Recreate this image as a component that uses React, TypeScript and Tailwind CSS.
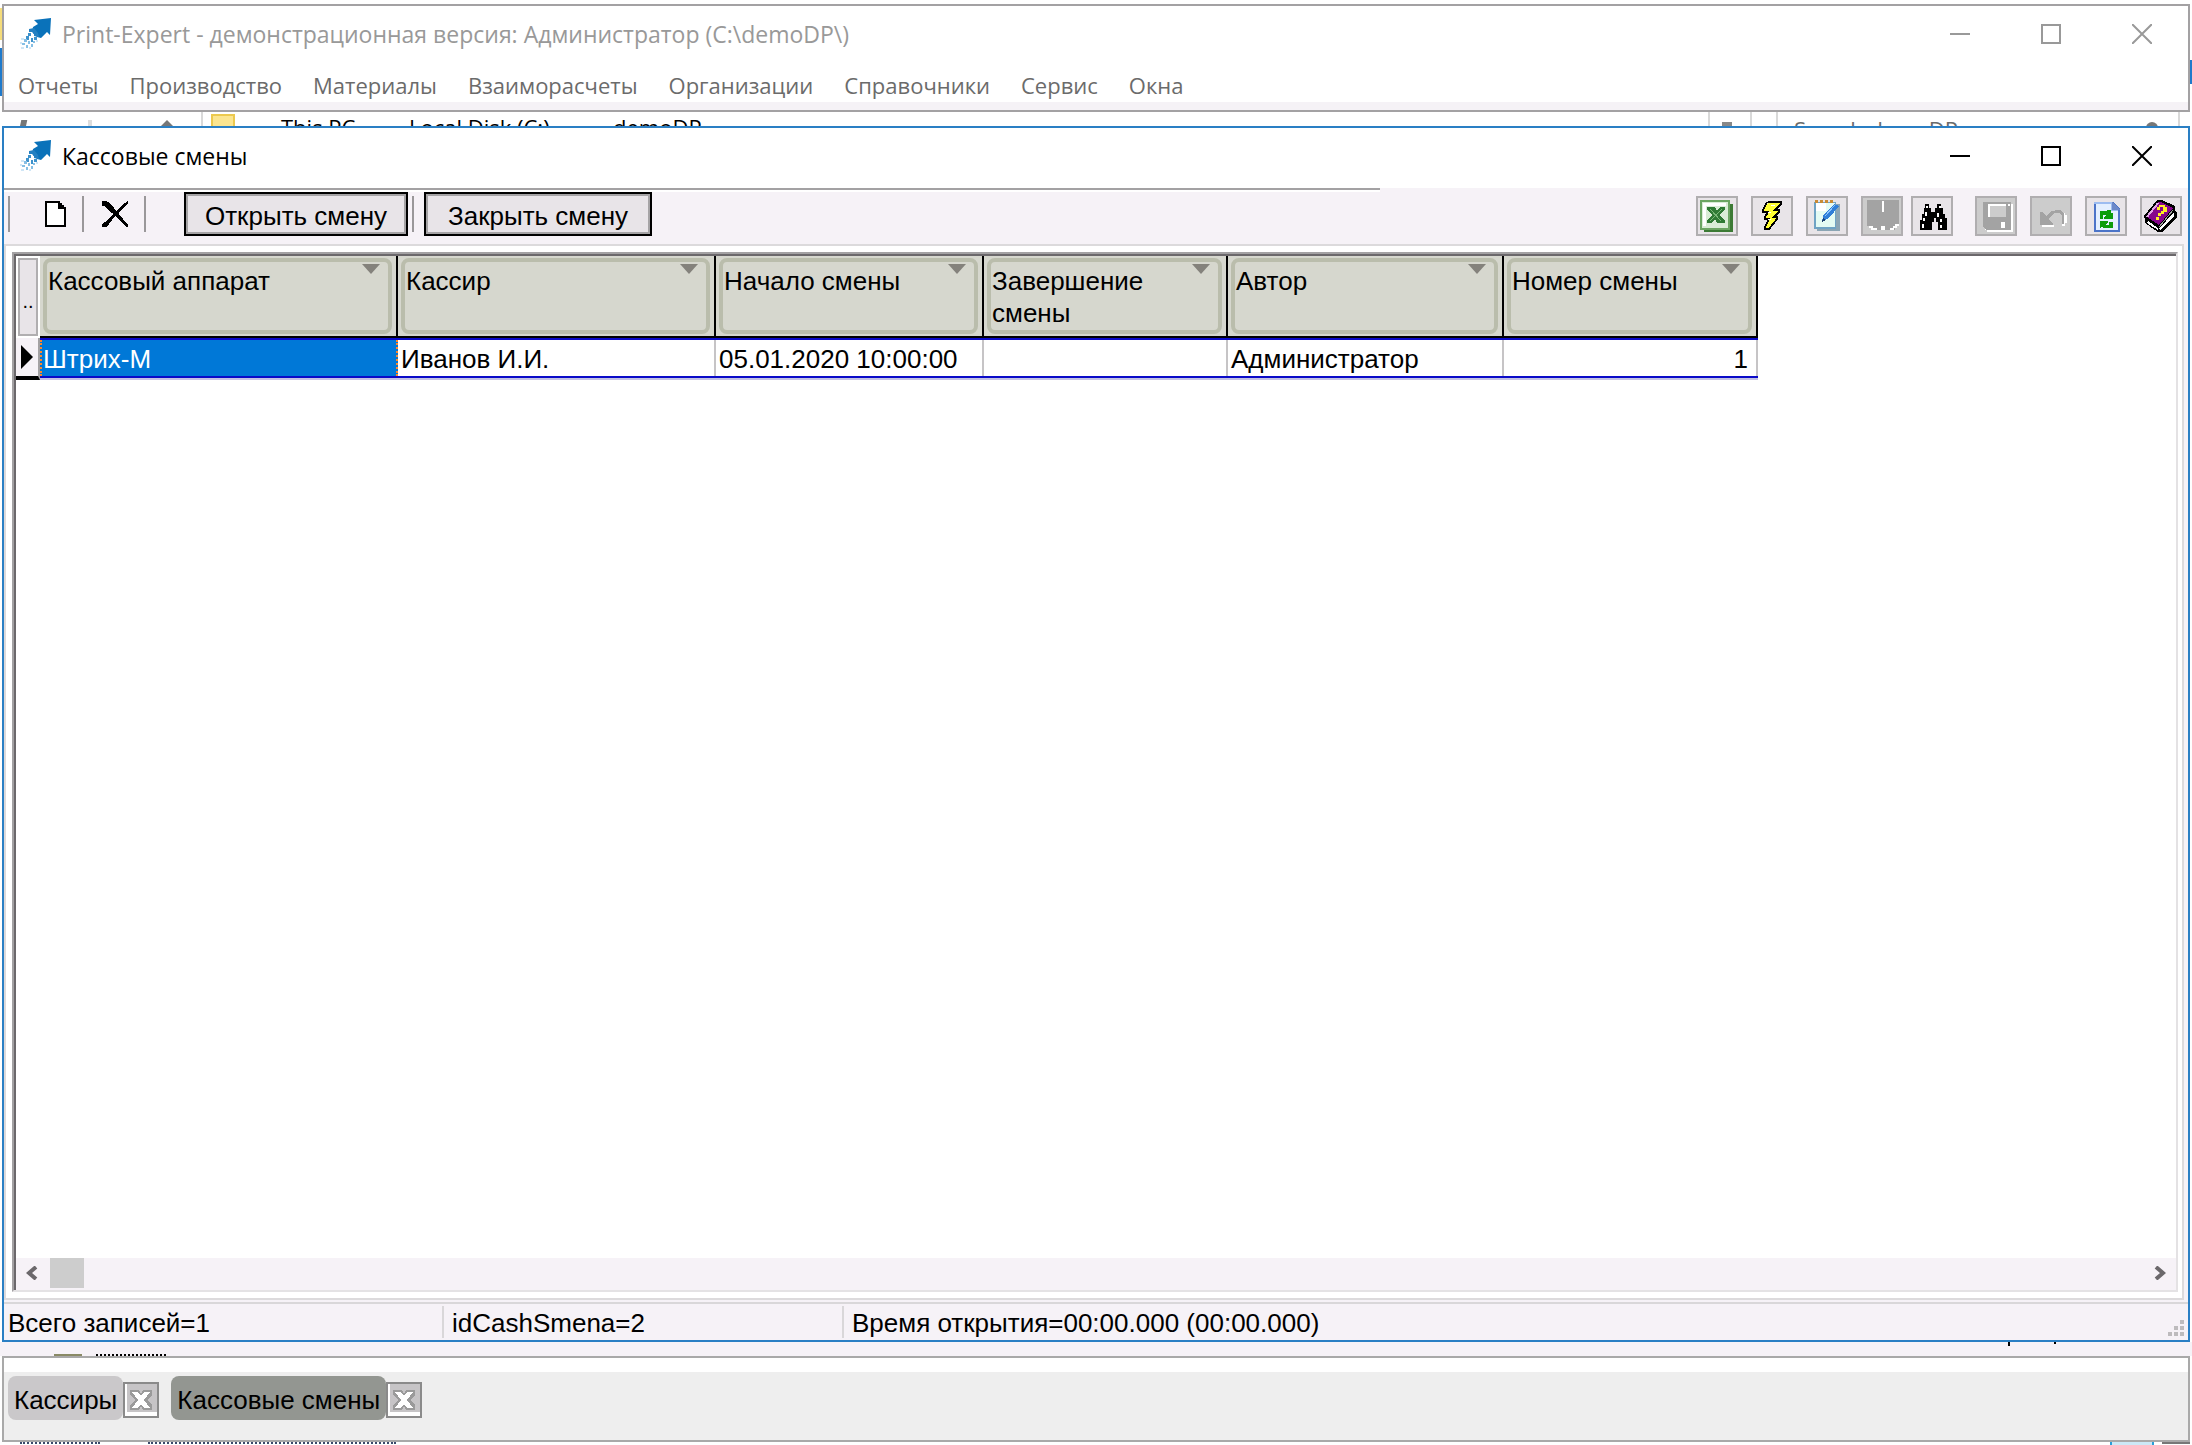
import type { ReactNode } from "react";

const menuItems = [
    "Отчеты",
    "Производство",
    "Материалы",
    "Взаиморасчеты",
    "Организации",
    "Справочники",
    "Сервис",
    "Окна",
];

const columns = [
    { title: "Кассовый аппарат", width: "w-[358px]" },
    { title: "Кассир", width: "w-[318px]" },
    { title: "Начало смены", width: "w-[268px]" },
    { title: "Завершение смены", width: "w-[244px]" },
    { title: "Автор", width: "w-[276px]" },
    { title: "Номер смены", width: "w-[254px]" },
];

const rows = [
    ["Штрих-М", "Иванов И.И.", "05.01.2020 10:00:00", "", "Администратор", "1"],
];

function AppLogo() {
    return (
        <svg className="size-8 shrink-0" viewBox="0 0 32 32" aria-hidden="true">
            <path d="M14 2 31 0 30 17 27 14 21 20 17 19 12 14 13 9 18 6Z" fill="#0a72ba" />
            <path d="M9 11 14 10 18 15 19 19 14 18 13 14 9 14Z" fill="#2380c2" />
            <path
                d="M8 15h3v3H8zM14 19h3v3h-3zM6 18h3v4H6zM11 20h2v4h-2z"
                fill="#3d92cc"
            />
            <path
                d="M4 21h3v3H4zM8 23h2v3H8zM2 25h3v2H2zM6 27h2v3H6zM11 26h2v3h-2zM13 23h2v2h-2z"
                fill="#86bfe4"
            />
            <path d="M0 24h2v2H0zM1 29h3v2H1zM9 29h2v2H9zM1 20h3v2H1zM16 22h2v2h-2z" fill="#cfe6f6" />
            <path d="M12 16h2v2h-2zM9 19h2v2H9z" fill="#fff" />
        </svg>
    );
}

function WindowControls({ color }: { color: string }) {
    return (
        <div className={`flex items-center gap-[71px] pr-9 ${color}`}>
            <button type="button" aria-label="Свернуть" className="flex h-5 w-5 items-center">
                <span className="h-0.5 w-5 bg-current" />
            </button>
            <button type="button" aria-label="Развернуть" className="h-5 w-5 border-2 border-current" />
            <button type="button" aria-label="Закрыть" className="h-5 w-5">
                <svg viewBox="0 0 20 20" fill="none" stroke="currentColor" strokeWidth="2">
                    <path d="M0 0 20 20M20 0 0 20" />
                </svg>
            </button>
        </div>
    );
}

function ToolButton({
    label,
    disabled,
    children,
}: {
    label: string;
    disabled?: boolean;
    children: ReactNode;
}) {
    return (
        <button
            type="button"
            aria-label={label}
            disabled={disabled}
            className="h-10 w-[42px] border-2 border-[#b0aeb0] bg-[#e8e4e8] disabled:bg-[#cccccc]"
        >
            <svg viewBox="0 0 38 36" className="h-9 w-[38px]" shapeRendering="crispEdges">
                {children}
            </svg>
        </button>
    );
}

function Separator() {
    return <span className="h-9 w-0.5 bg-[#9a989a]" />;
}

function ExcelIcon() {
    return (
        <>
            <path d="M6 6h29v28H6z" fill="#3c7a35" />
            <path d="M2 2h30v30H2z" fill="#6ba562" />
            <path d="M4 4h26v26H4z" fill="#d9ecd6" />
            <path d="M5 5h23v3H5zM5 8h3v20H5z" fill="#fff" />
            <path d="M9 9h8l2 4 3-4h5v2l-5 6 5 6v2h-8l-2-4-3 4H9v-2l5-6-5-6z" fill="#2f7a34" />
            <path d="m12 11 11 12M24 11 12 23" stroke="#7ab878" strokeWidth="1" />
        </>
    );
}

function LightningIcon() {
    return (
        <>
            <path
                d="M16 4h12v2l-6 6h4v2l-5 5h3v2l-8 10h-4v-2l4-8h-4v-2l3-5h-5v-2z"
                fill="#ffff33"
            />
            <path
                d="M15 4h13v2l-6 6h4v2l-5 5h3v2l-8 10h-4v-2l4-8h-4v-2l3-5h-5v-2l4-8"
                fill="none"
                stroke="#000"
                strokeWidth="2"
            />
            <path d="M18 7h4M15 14h3M15 21h3" stroke="#fff" strokeWidth="1" />
        </>
    );
}

function NotepadIcon() {
    return (
        <>
            <path d="M9 6h23v27H9z" fill="#8ba5b4" />
            <path d="M6 4h22v27H6z" fill="#6fa3c4" />
            <path d="M8 5h19v24H8z" fill="#e4fbf3" />
            <path d="M8 5h10v8H8z" fill="#fff" />
            <path
                d="M7 2h3v3H7zM12 2h3v3h-3zM17 2h3v3h-3zM22 2h3v3h-3z"
                fill="#c98b35"
            />
            <path d="m15 18 11-12 5 2-10 12-7 4z" fill="#2f7fd8" />
            <path d="m17 18 10-11" stroke="#8cc4ff" strokeWidth="1" />
            <path d="m14 24 1-4 3 2z" fill="#1c3f70" />
        </>
    );
}

function OpenBookIcon() {
    return (
        <>
            <path d="M4 2h32v26h-4v4H8v-4H4z" fill="#a3a3a3" />
            <path d="M19 3h2v11h-2z" fill="#fff" />
            <path
                d="M6 28h4v2h4v2H8v-2H6zM18 28h4v4h-4zM32 26h4v2h-2v2h-3v2h-4v-2h3v-2h2z"
                fill="#fff"
            />
        </>
    );
}

function BinocularsIcon() {
    return (
        <>
            <path
                d="M12 6h4v4h2v4h4v-4h2V6h4v4h2v6h2v4h2v12h-9v-8h-2v-4h-2v4h-2v8H7V22h2v-6h2v-6h1z"
                fill="#000"
            />
            <path
                d="M13 8h2v2h-2zM26 8h2v2h-2zM12 14h2v4h-2zM10 20h2v3h-2zM24 15h2v4h-2zM27 21h2v3h-2zM9 26h2v4H9zM27 27h2v3h-2z"
                fill="#fff"
            />
        </>
    );
}

function SaveIcon() {
    return (
        <>
            <path d="M8 6h28v28H10v-2H8z" fill="#fff" />
            <path d="M6 4h28v28H9l-3-3z" fill="#a3a3a3" />
            <path d="M11 6h18v13H11z" fill="#fff" />
            <path d="M13 8h16v11H13z" fill="#cccccc" />
            <path d="M31 6h2v2h-2zM24 24h4v6h-4z" fill="#fff" />
        </>
    );
}

function UndoIcon() {
    return (
        <>
            <path d="M10 27h12v2H10zM31 15h2v2h2v8h-2v3h-3v-2h1z" fill="#fff" />
            <path d="M8 14h2l4 4 5-5h3l1-1h5l4 4v10h-2v-8l-3-3h-4l-5 4-1 3 4 4v1H8z" fill="#a3a3a3" />
        </>
    );
}

function RefreshIcon() {
    return (
        <>
            <path d="M7 4h19l7 7v23H7z" fill="#4c74c8" />
            <path d="M7 4h18l6 7v21H9V6H7z" fill="#9cbcf0" />
            <path d="M9 6h15v7h7v19H9z" fill="#e3efff" />
            <path d="M25 4v8h8z" fill="#6c88c8" />
            <path d="M13 13h5l3-1h3v3h2v6h-9v-2l3-2h-4v4h-3z" fill="#0c9c0c" />
            <path d="M13 23h8v2l-3 2h4v-3h4v6H16l-1-2-2 2z" fill="#0c9c0c" />
        </>
    );
}

function HelpBookIcon() {
    return (
        <>
            <path d="M15 2h5l13 6v4l2 3v4L20 34h-4L3 25v-4l-1-3z" fill="#000" />
            <path d="m17 31 15-17v4L18 32zM6 23l10 7v2L5 25z" fill="#fff" />
            <path d="M16 4h3l12 6-14 17L5 19z" fill="#86058c" />
            <path d="M5 19 16 5" stroke="#e0a6e4" strokeWidth="2" />
            <path d="m17 29 14-17" stroke="#9c9c9c" strokeWidth="1" />
            <path
                d="M15 9h2V7h6v2h2v5h-3v2h-3v2h-3v-3h3v-2h2V9h-3v3h-3zM14 19h3v3h-3z"
                fill="#ffee22"
            />
        </>
    );
}

function MainWindow() {
    return (
        <section className="flex shrink-0">
            <div className="w-0.5 pt-1">
                <div className="h-8 bg-[#f5dc7a]" />
                <div className="mt-2 h-12 bg-[#1f7acb]" />
            </div>
            <div className="min-w-0 flex-1 border-2 border-[#a3a1a3] bg-white font-['Open_Sans','Noto_Sans',sans-serif]">
                <header className="flex h-14 items-center justify-between text-[#999999]">
                    <div className="flex items-center gap-2.5 pl-4">
                        <AppLogo />
                        <h1 className="text-[23px] leading-8">
                            Print-Expert - демонстрационная версия: Администратор (C:\demoDP\)
                        </h1>
                    </div>
                    <WindowControls color="text-[#999999]" />
                </header>
                <nav className="flex h-10 gap-[31px] pl-3.5 text-[22px] leading-[46px] text-[#6b6b6b]">
                    {menuItems.map((item) => (
                        <button key={item} type="button">
                            {item}
                        </button>
                    ))}
                </nav>
                <div className="h-2 bg-[#f5f2f6]" />
            </div>
            <div className="w-0.5 pt-14">
                <div className="h-6 bg-[#1f7acb]" />
            </div>
        </section>
    );
}

// Explorer window that shows through between the two application windows.
function ExplorerAddressBar() {
    return (
        <div className="flex h-3.5 shrink-0 overflow-hidden bg-white pr-3 text-[22px] leading-[30px] font-['Open_Sans','Noto_Sans',sans-serif]">
            <div className="flex w-[201px] items-start justify-between pt-2 pr-5 pl-5">
                <span className="h-3 w-1.5 -skew-x-12 bg-[#777777]" />
                <span className="h-3 w-1 bg-[#dddddd]" />
                <svg className="h-3 w-7" viewBox="0 0 28 12" aria-hidden="true">
                    <path d="M2 12 14 0l12 12z" fill="#777777" />
                </svg>
            </div>
            <div className="flex flex-1 border-x-2 border-[#d9d9d9] pl-2 text-black">
                <span className="mt-0.5 h-8 w-6 border-2 border-[#ecc94f] bg-[#fbe590]" />
                <span className="ml-[46px] w-[128px]">This PC</span>
                <span className="w-[204px]">Local Disk (C:)</span>
                <span>demoDP</span>
            </div>
            <div className="w-10 pt-2.5 pl-3">
                <div className="h-4 w-2.5 bg-[#888888]" />
            </div>
            <div className="w-[26px] border-l-2 border-[#d9d9d9]" />
            <div className="flex w-[404px] justify-between border-x-2 border-[#d9d9d9] pt-0.5 pr-5 pl-4 text-[#6b6b6b]">
                <span>Search demoDP</span>
                <span className="mt-2 size-3 rounded-full bg-[#777777]" />
            </div>
        </div>
    );
}

function Toolbar() {
    return (
        <div className="flex h-14 shrink-0 items-start justify-between bg-[#f6f2f7] pr-1.5">
            <div className="min-w-0">
                <div className="h-1 w-[1376px] border-t-2 border-b-2 border-t-[#a3a1a3] border-b-white" />
                <div className="flex h-11 items-center pl-1">
                    <Separator />
                    <button type="button" aria-label="Новая запись" className="ml-[34px] h-7 w-6">
                        <svg viewBox="0 0 24 28" shapeRendering="crispEdges">
                            <path
                                d="M2 2h13v2h2v2h2v2h2v18H2zM15 2v6h6"
                                fill="#fff"
                                stroke="#000"
                                strokeWidth="2"
                            />
                        </svg>
                    </button>
                    <span className="w-3.5" />
                    <Separator />
                    <button type="button" aria-label="Удалить запись" className="ml-[18px] h-[26px] w-7">
                        <svg viewBox="0 0 28 26" fill="#000" shapeRendering="crispEdges">
                            <path d="M0 0h4l4 2 18 22v2h-2l-8-8-6-6-8-7H0z" />
                            <path d="M26 0v2l-9 9-7 8-5 7H0v-3l6-4 8-9 9-8z" />
                        </svg>
                    </button>
                    <span className="w-3.5" />
                    <Separator />
                    <button
                        type="button"
                        className="ml-[38px] h-11 w-[224px] border-2 border-black bg-[#e8e4e8] pt-1 text-[26px] leading-9 shadow-[inset_2px_2px_#a5a3a5,inset_-2px_-2px_#a5a3a5]"
                    >
                        Открыть смену
                    </button>
                    <span className="w-1" />
                    <Separator />
                    <button
                        type="button"
                        className="ml-2.5 h-11 w-[228px] border-2 border-black bg-[#e8e4e8] pt-1 text-[26px] leading-9 shadow-[inset_2px_2px_#a5a3a5,inset_-2px_-2px_#a5a3a5]"
                    >
                        Закрыть смену
                    </button>
                </div>
            </div>
            <div className="flex pt-2">
                <div className="flex gap-[13px]">
                    <ToolButton label="Экспорт в Excel"><ExcelIcon /></ToolButton>
                    <ToolButton label="Быстрое действие"><LightningIcon /></ToolButton>
                    <ToolButton label="Редактировать"><NotepadIcon /></ToolButton>
                    <ToolButton label="Журнал" disabled><OpenBookIcon /></ToolButton>
                </div>
                <div className="ml-2">
                    <ToolButton label="Поиск"><BinocularsIcon /></ToolButton>
                </div>
                <div className="ml-[22px] flex gap-[13px]">
                    <ToolButton label="Сохранить" disabled><SaveIcon /></ToolButton>
                    <ToolButton label="Отменить" disabled><UndoIcon /></ToolButton>
                    <ToolButton label="Обновить"><RefreshIcon /></ToolButton>
                    <ToolButton label="Справка"><HelpBookIcon /></ToolButton>
                </div>
            </div>
        </div>
    );
}

function ShiftsTable() {
    return (
        <table className="w-[1742px] table-fixed border-separate border-spacing-0 text-[26px] text-black">
            <thead>
                <tr className="h-[82px]">
                    <th className="w-6 p-0 align-top">
                        <button
                            type="button"
                            aria-label="Настройка столбцов"
                            className="mt-0.5 ml-0.5 block h-[78px] w-5 border-2 border-[#b0aeb0] bg-[#e8e4e8] pt-2 text-center text-xl leading-8 font-normal"
                        >
                            ..
                        </button>
                    </th>
                    {columns.map((column) => (
                        <th
                            key={column.title}
                            scope="col"
                            className={`${column.width} border-r-2 border-b-2 border-black bg-[#d6d7ce] p-0 text-left align-top font-normal`}
                        >
                            <div className="mt-0.5 mr-1 ml-[3px] flex h-[76px] items-start rounded-lg border-4 border-[#babdac] pr-2 pl-px">
                                <span className="min-w-0 flex-1 pt-[3px] leading-8">{column.title}</span>
                                <svg className="mt-0.5 h-2.5 w-[18px] shrink-0" viewBox="0 0 18 10" aria-hidden="true">
                                    <path d="M0 0h18l-9 10z" fill="#84827c" />
                                </svg>
                            </div>
                        </th>
                    ))}
                </tr>
            </thead>
            <tbody>
                {rows.map((row) => (
                    <tr key={row[0]}>
                        <td className="border-r-2 border-b-4 border-r-[#a3a1a3] border-b-black bg-[#f6f2f7] p-0">
                            <svg className="mx-auto h-6 w-3" viewBox="0 0 12 24" aria-hidden="true">
                                <path d="M0 0v24l12-12z" />
                            </svg>
                        </td>
                        {row.map((value, i) => (
                            <td
                                key={columns[i].title}
                                className="border-b-2 border-[#c4c2e4] p-0 leading-[38px]"
                            >
                                <div
                                    className={
                                        i === 0
                                            ? "h-10 border-y-2 border-[#0a0ac8] bg-[#0078d7] text-white"
                                            : "h-10 border-y-2 border-[#0a0ac8] bg-white"
                                    }
                                >
                                    <div
                                        className={
                                            i === 0
                                                ? "h-9 border-x-2 border-dotted border-[#ff8728] pl-px"
                                                : i === row.length - 1
                                                  ? "h-9 border-r-2 border-[#c6c4c6] pr-2 text-right"
                                                  : "h-9 border-r-2 border-[#c6c4c6] pl-[3px]"
                                        }
                                    >
                                        {value}
                                    </div>
                                </div>
                            </td>
                        ))}
                    </tr>
                ))}
            </tbody>
        </table>
    );
}

function GridScrollbar() {
    return (
        <div className="flex h-8 shrink-0 items-start bg-[#f6f2f7] text-[#6b686b]">
            <button type="button" aria-label="Прокрутить влево" className="flex h-[30px] w-[34px] items-center pl-2.5">
                <svg className="h-3.5 w-3" viewBox="0 0 12 14" fill="none" stroke="currentColor" strokeWidth="4">
                    <path d="m10 1-7 6 7 6" />
                </svg>
            </button>
            <div className="h-[30px] w-[34px] bg-[#cdcdcd]" />
            <button type="button" aria-label="Прокрутить вправо" className="ml-auto flex h-[30px] w-[34px] items-center justify-end pr-2.5">
                <svg className="h-3.5 w-3" viewBox="0 0 12 14" fill="none" stroke="currentColor" strokeWidth="4">
                    <path d="m2 1 7 6-7 6" />
                </svg>
            </button>
        </div>
    );
}

function StatusBar() {
    return (
        <footer className="flex h-[38px] shrink-0 border-t-2 border-[#d9d7d9] bg-[#f6f2f7] text-[26px] leading-[38px]">
            <div className="w-[438px] pl-1">Всего записей=1</div>
            <div className="mt-0.5 h-8 w-[400px] border-l-2 border-[#d9d7d9] pl-2 leading-[34px]">
                idCashSmena=2
            </div>
            <div className="mt-0.5 h-8 flex-1 border-l-2 border-[#d9d7d9] pl-2 leading-[34px]">
                Время открытия=00:00.000 (00:00.000)
            </div>
            <svg className="mr-1 mb-1 h-4 w-4 self-end" viewBox="0 0 16 16" fill="#bdbbbd" aria-hidden="true">
                <path d="M12 0h4v4h-4zM12 6h4v4h-4zM12 12h4v4h-4zM6 6h4v4H6zM6 12h4v4H6zM0 12h4v4H0z" />
            </svg>
        </footer>
    );
}

function ShiftsWindow() {
    return (
        <main className="mx-0.5 flex min-h-0 flex-1 flex-col border-2 border-[#2a7fc4] bg-[#f6f2f7]">
            <header className="flex h-[60px] shrink-0 items-center justify-between bg-white pb-1 font-['Open_Sans','Noto_Sans',sans-serif]">
                <div className="flex items-center gap-2.5 pl-4">
                    <AppLogo />
                    <h2 className="text-[23px] leading-8 text-black">Кассовые смены</h2>
                </div>
                <WindowControls color="text-black" />
            </header>
            <Toolbar />
            <div className="mr-1 flex min-h-0 flex-1 flex-col border-2 border-[#dcdadc] bg-white pt-1.5 pr-1 pb-1.5 pl-1.5">
                <div className="flex min-h-0 flex-1 flex-col border-2 border-t-[#a3a1a3] border-r-[#e4e2e4] border-b-[#e4e2e4] border-l-[#a3a1a3]">
                    <div className="flex min-h-0 flex-1 flex-col border-t-2 border-l-2 border-[#6b686b]">
                        <div className="min-h-0 flex-1 overflow-hidden">
                            <ShiftsTable />
                        </div>
                        <GridScrollbar />
                    </div>
                </div>
            </div>
            <div className="h-0.5 shrink-0" />
            <StatusBar />
        </main>
    );
}

function TabClose({ label }: { label: string }) {
    return (
        <button
            type="button"
            aria-label={label}
            className="flex h-9 w-9 items-center justify-center border-2 border-[#8a8a8a] bg-[#c6c4c6] shadow-[inset_2px_-4px_#ffffff]"
        >
            <svg className="h-5 w-6" viewBox="0 0 24 20" shapeRendering="crispEdges">
                <path d="M1 0h9l2 4 2-4h9v5l-5 5 5 5v5h-9l-2-4-2 4H1v-5l5-5-5-5z" fill="#9a9a9a" />
                <path d="M3 2h6l3 4 3-4h6l-6 8 6 8h-6l-3-4-3 4H3l6-8z" fill="#fff" />
            </svg>
        </button>
    );
}

function WindowTabs() {
    return (
        <section className="mx-0.5 shrink-0 border-2 border-[#a9a9a9] bg-white pt-3.5">
            <div className="flex h-[68px] items-start gap-3 bg-[#eeeeee] pt-1 pl-1 text-[26px] leading-10">
                <div className="flex items-start">
                    <button type="button" className="h-11 rounded-lg bg-[#cac8ca] px-1.5 pt-1">
                        Кассиры
                    </button>
                    <div className="pt-1.5">
                        <TabClose label="Закрыть Кассиры" />
                    </div>
                </div>
                <div className="flex items-start">
                    <button type="button" className="h-11 rounded-lg bg-[#939691] px-1.5 pt-1">
                        Кассовые смены
                    </button>
                    <div className="pt-1.5">
                        <TabClose label="Закрыть Кассовые смены" />
                    </div>
                </div>
            </div>
        </section>
    );
}

export default function App() {
    return (
        <div className="flex h-screen flex-col bg-white pt-1 font-['Liberation_Sans',Arial,sans-serif] text-black">
            <MainWindow />
            <ExplorerAddressBar />
            <ShiftsWindow />
            <div className="flex h-3.5 shrink-0 justify-between bg-[#f6f2f7] pr-[136px] pl-[54px]">
                <div className="flex items-end gap-3.5">
                    <span className="h-0.5 w-7 bg-[#8a8a66]" />
                    <span className="w-[70px] border-b-2 border-dotted border-black" />
                </div>
                <div className="flex gap-11">
                    <span className="h-1 w-0.5 bg-black" />
                    <span className="h-0.5 w-0.5 bg-black" />
                </div>
            </div>
            <WindowTabs />
            <div className="flex h-[3px] shrink-0 items-start justify-between pr-0.5 pl-5 text-[#3a4a6b]">
                <div className="flex gap-12">
                    <span className="w-20 border-b-2 border-dotted border-current" />
                    <span className="w-[248px] border-b-2 border-dotted border-current" />
                </div>
                <div className="flex gap-2">
                    <span className="h-[3px] w-11 border-x-2 border-[#2a9fd8] bg-[#cce8f6]" />
                    <span className="h-0.5 w-7 bg-[#777777]" />
                </div>
            </div>
        </div>
    );
}
